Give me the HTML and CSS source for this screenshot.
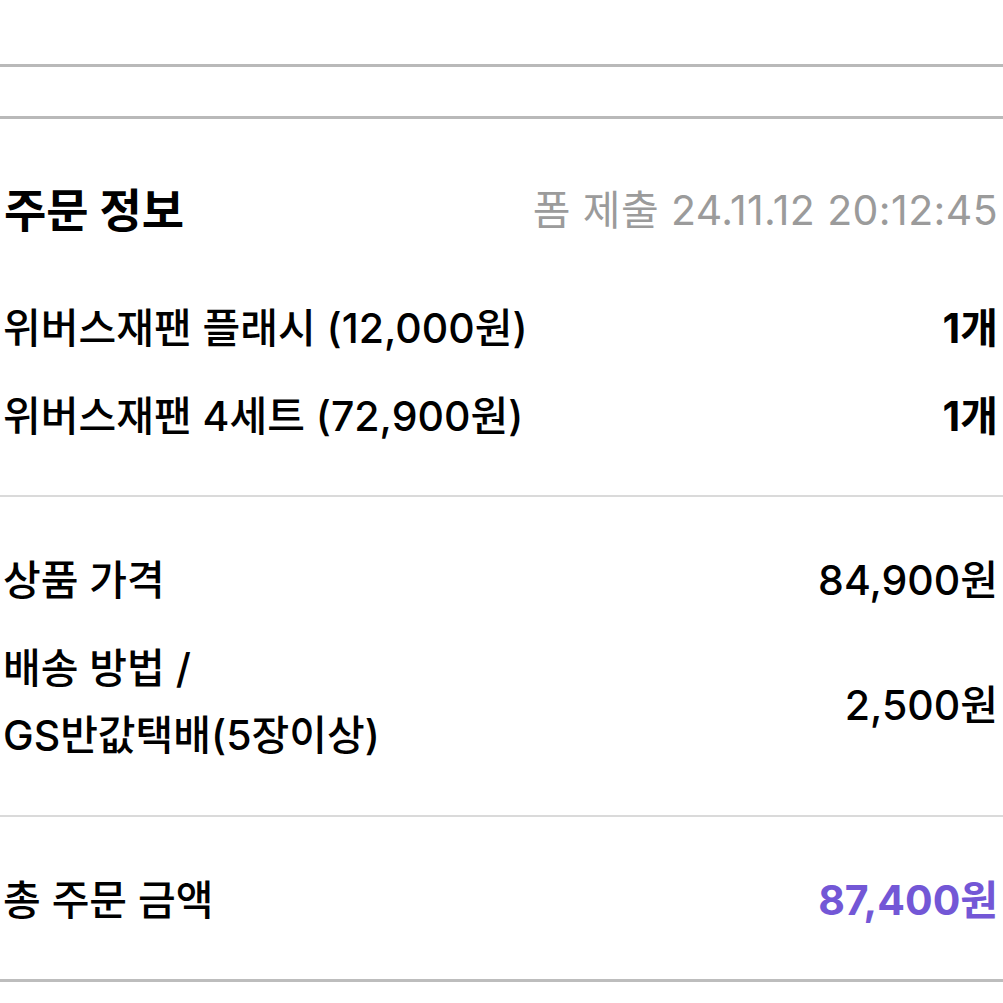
FILE: index.html
```html
<!DOCTYPE html>
<html lang="ko">
<head>
    <meta charset="UTF-8">
    <meta name="viewport" content="width=device-width, initial-scale=1.0">
    <title>주문 정보</title>
    <link rel="stylesheet" href="styles.css">
</head>
<body>
    <div class="prev-section"></div>
    <div class="spacer"></div>

    <section class="order">
        <div class="order-head">
            <h2 class="order-title">주문 정보</h2>
            <span class="order-date">폼 제출 24.11.12 20:12:45</span>
        </div>
        <div class="row item">
            <span>위버스재팬 플래시 (12,000원)</span>
            <span class="qty">1개</span>
        </div>
        <div class="row item">
            <span>위버스재팬 4세트 (72,900원)</span>
            <span class="qty">1개</span>
        </div>
    </section>

    <section class="prices">
        <div class="row price">
            <span>상품 가격</span>
            <span>84,900원</span>
        </div>
        <div class="row shipping">
            <span class="ship-label">배송 방법 /<br>GS반값택배(5장이상)</span>
            <span>2,500원</span>
        </div>
    </section>

    <section class="total">
        <div class="row price">
            <span>총 주문 금액</span>
            <span class="total-value">87,400원</span>
        </div>
    </section>
</body>
</html>
```

FILE: styles.css
```css
*{
    font-family: "Inter", "Noto Sans CJK KR", sans-serif;
    padding: 0;
    margin: 0;
    box-sizing: border-box;
}
body {
    background-color: white;
    color: #000;
    font-size: 41px;
    font-weight: 500;
}
.prev-section {
    height: 67px;
    border-bottom: 3px solid #b9b9b9;
}
.spacer {
    height: 52px;
    border-bottom: 3px solid #b9b9b9;
}
.row {
    display: flex;
    justify-content: space-between;
    align-items: center;
    padding: 0 5px 0 3px;
}
.order {
    padding-top: 44px;
    padding-bottom: 38px;
    border-bottom: 2px solid #dadada;
}
.order-head {
    display: flex;
    justify-content: space-between;
    align-items: center;
    height: 88px;
    margin-bottom: 30px;
    padding: 0 5px 0 4px;
}
.order-title {
    font-size: 46px;
    font-weight: bold;
}
.order-date {
    color: #9b9b9b;
    font-weight: 400;
    letter-spacing: 0.4px;
}
.item {
    height: 88px;
}
.item .qty {
    font-weight: bold;
}
.prices {
    padding-top: 40px;
    padding-bottom: 46px;
    border-bottom: 2px solid #dadada;
}
.price {
    height: 80px;
}
.shipping {
    margin-top: 18px;
}
.ship-label {
    line-height: 67px;
}
.total {
    padding-top: 40px;
    padding-bottom: 42px;
    border-bottom: 3px solid #bdbdbd;
}
.total-value {
    color: #7357d6;
    font-weight: bold;
}
```
